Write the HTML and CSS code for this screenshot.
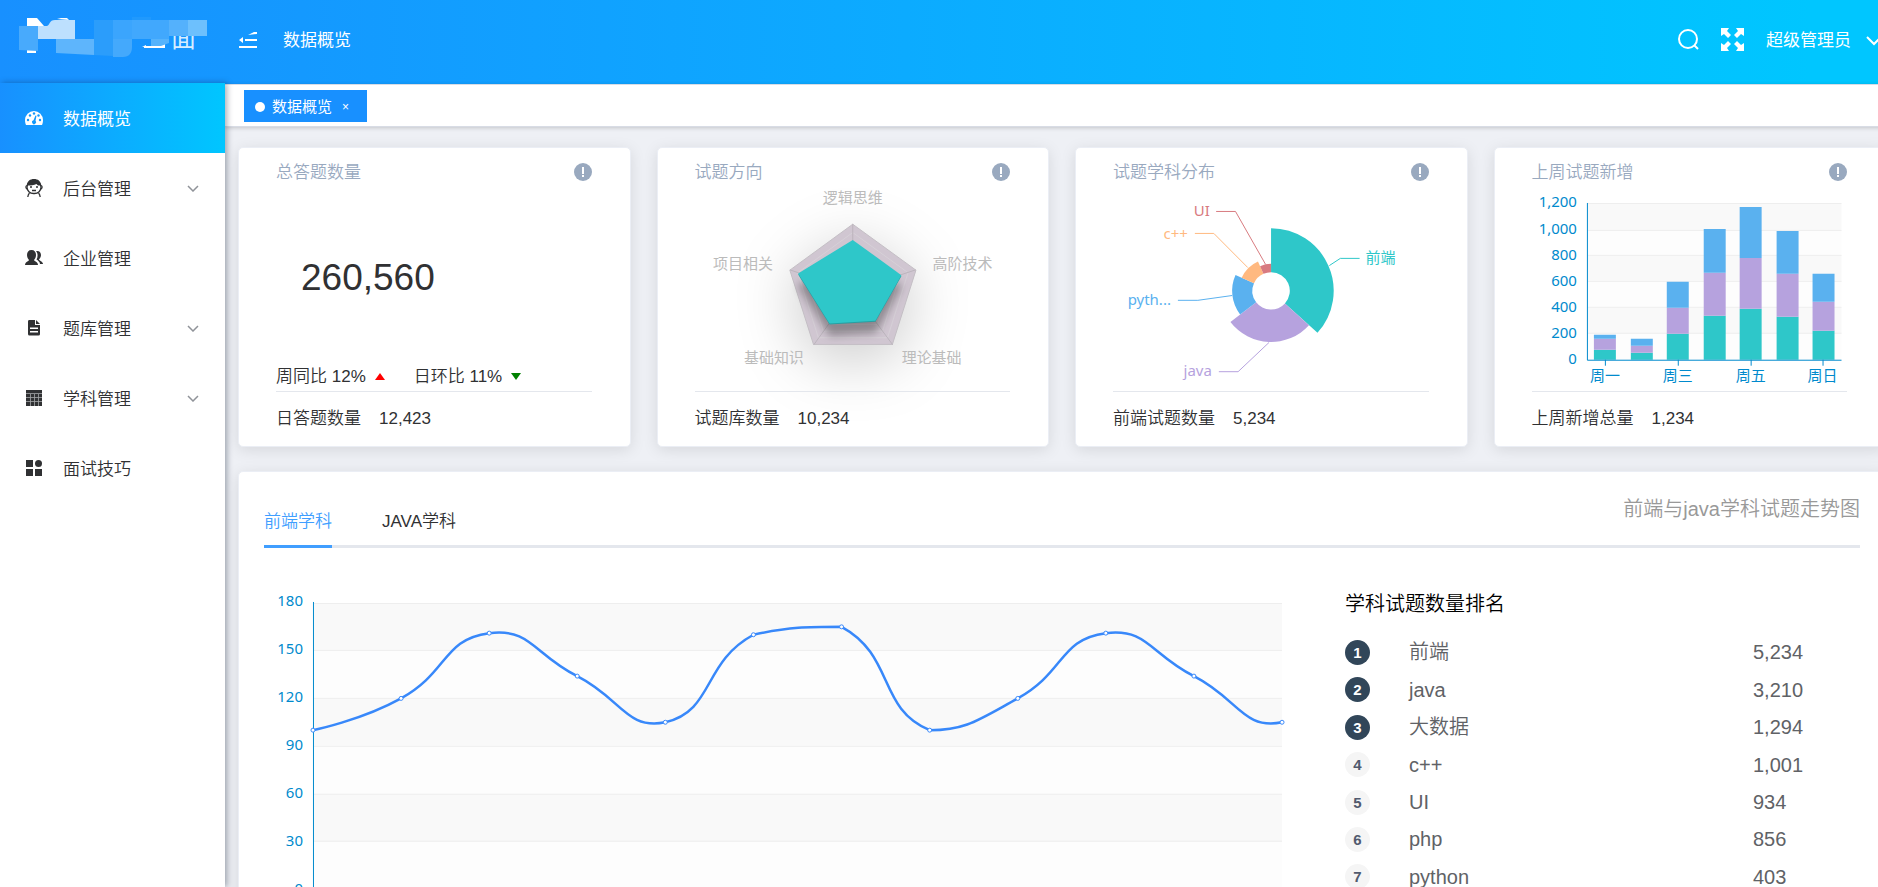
FILE: index.html
```html
<!DOCTYPE html>
<html lang="zh-CN">
<head>
<meta charset="utf-8">
<title>数据概览</title>
<link rel="stylesheet" href="styles.css">
</head>
<body>
<div class="app">
  <header class="topbar">
    <a class="logo" href="#" aria-label="首页">
      <svg width="225" height="84" viewBox="0 0 225 84">
        <text class="logo-text" x="171" y="47">面</text>
        <path fill="#1694fe" d="M168 20h32v16h-32z"/>
        <path fill="#fff" d="M27 18h10l7 8h-6v5H27zM57 19l4-1h6l2 2zM27 50h9v3h-9z"/>
        <path fill="#fff" d="M142 47l4-2v2zM144 46h17v-2h4v4h-21z"/>
        <path fill="#48aafc" d="M19 26h19v25l-19-1z"/>
        <path fill="#bde0fe" d="M38 26h9c3-1 2-6 8-6h20v19H38z"/>
        <path fill="#5eb5fc" d="M56 39h38v16l-38-2z"/>
        <path fill="#2b9dfb" d="M94 20h19v19H94zM94 39h19v17l-19-1z"/>
        <path fill="#3ba5fd" d="M113 20h19v19h-19z"/>
        <path fill="#44a9fc" d="M113 39h19v8c0 6-3 10-9 10h-10z"/>
        <path fill="#2099fd" d="M132 17h19v3h-19z"/>
        <path fill="#41a8fd" d="M132 20h37v19h-37z"/>
        <path fill="#55b3fc" d="M151 39h18v4l-8 3h-10z"/>
        <path fill="#54b1fc" d="M169 20h19v16h-19z"/>
        <path fill="#6dc0fd" d="M188 20h19v16h-19z"/>
      </svg>
    </a>
    <button class="icon-btn fold" aria-label="收起菜单">
      <svg width="18" height="16" viewBox="0 0 18 16" fill="#fff"><path d="M9 3l6-3h3v2zM6 7h12v2H6zM0 14h18v2H0zM0 8l4-3v6z"/></svg>
    </button>
    <span class="topbar-title">数据概览</span>
    <div class="topbar-right">
      <button class="icon-btn" aria-label="搜索">
        <svg width="21" height="21" viewBox="0 0 21 21" fill="none" stroke="#fff" stroke-width="2"><circle cx="10" cy="10" r="9"/><path d="M16 16l4 4"/></svg>
      </button>
      <button class="icon-btn full" aria-label="全屏">
        <svg width="23" height="23" viewBox="0 0 23 23" fill="#fff"><path d="M0 0h8L6 3l4 4-3 3-4-4-3 2z"/><path d="M23 0v8l-3-2-4 4-3-3 4-4-2-3zM23 23h-8l2-3-4-4 3-3 4 4 3-2zM0 23v-8l3 2 4-4 3 3-4 4 2 3z"/></svg>
      </button>
      <button class="user">超级管理员
        <svg width="16" height="10" viewBox="0 0 16 10" fill="none" stroke="#fff" stroke-width="2"><path d="M1 1l7 7 7-7"/></svg>
      </button>
    </div>
  </header>

  <div class="body">
    <nav class="sidebar">
      <a class="nav-item active" href="#">
        <svg class="nav-icon" viewBox="0 0 18 18"><path fill="#fff" d="M0 11a9 9 0 0 1 18 0c0 2-.5 4-1 5H1c-.5-1-1-3-1-5z"/><g fill="#1199fc"><circle cx="3" cy="11" r="1.200"/><circle cx="5" cy="6.500" r="1.200"/><circle cx="9" cy="4.500" r="1.200"/><circle cx="13.500" cy="6.500" r="1.200"/><circle cx="15" cy="11" r="1.200"/><path d="M10.500 6.500l1 .3-1 5a2 2 0 1 1-2-.5z"/></g></svg>
        <span class="nav-text">数据概览</span>
      </a>
      <a class="nav-item" href="#">
        <svg class="nav-icon" viewBox="0 0 18 18" fill="none" stroke="#303133" stroke-width="1.300"><path fill="#303133" stroke="none" d="M1.600 6.500C2.500 2 5 0 9 0s6.500 2 7.400 6.500H13L11.500 5C9 6 6 6.500 1.600 6.500z"/><rect x="2" y="2" width="14" height="12.500" rx="6.500"/><path d="M2 6.500c-1.500.5-1.500 3 .3 3.500M16 6.500c1.500.5 1.500 3-.3 3.500M5 8h2M11 8h2M7 11.500h4M4.500 14c-1 1-1.500 2-1.700 4M13.500 14c1 1 1.500 2 1.700 4"/></svg>
        <span class="nav-text">后台管理</span>
        <svg class="nav-arrow" viewBox="0 0 12 7"><path d="M1 1l5 5 5-5"/></svg>
      </a>
      <a class="nav-item" href="#">
        <svg class="nav-icon" viewBox="0 0 18 18" fill="#303133"><path d="M6.500 1C9.500 1 11 3 11 6c0 2-1 4-2 5 0 1 4 2 4 5H0c0-3 4-4 4-5-1-1-2-3-2-5 0-3 1.500-5 4.500-5z"/><path d="M11 2c3-.6 5 1 5 4 0 2-1 3-2 4.500 0 1 4 2 4 4.500h-3c0-2-2-3.500-3.500-4.500C13 8 13 4 11 2z"/></svg>
        <span class="nav-text">企业管理</span>
      </a>
      <a class="nav-item" href="#">
        <svg class="nav-icon" viewBox="0 0 18 18" fill="#303133"><path fill-rule="evenodd" d="M4 1h6v5h5v9a1.500 1.500 0 0 1-1.500 1.500h-9A1.500 1.500 0 0 1 3 15V2.500A1.500 1.500 0 0 1 4 1zM5 8.500V10h8V8.500zM5 12v1.500h8V12z"/><path d="M11 1l4 4h-4z"/></svg>
        <span class="nav-text">题库管理</span>
        <svg class="nav-arrow" viewBox="0 0 12 7"><path d="M1 1l5 5 5-5"/></svg>
      </a>
      <a class="nav-item" href="#">
        <svg class="nav-icon" viewBox="0 0 18 18"><path fill="#303133" d="M1 1h16v16H1z"/><path stroke="#a5a6a8" stroke-width=".8" d="M1 4.500h16M1 8.500h16M1 12.500h16M5.500 5v12M9.500 5v12M13.500 5v12"/></svg>
        <span class="nav-text">学科管理</span>
        <svg class="nav-arrow" viewBox="0 0 12 7"><path d="M1 1l5 5 5-5"/></svg>
      </a>
      <a class="nav-item" href="#">
        <svg class="nav-icon" viewBox="0 0 18 18" fill="#303133"><path d="M1 1h7v7H1zM1 10h7v7H1zM10 10h7v7h-7z"/><circle cx="13.500" cy="4.500" r="3.500"/></svg>
        <span class="nav-text">面试技巧</span>
      </a>
    </nav>

    <main class="main">
      <div class="tagbar">
        <div class="tag"><span class="tag-dot"></span><span>数据概览</span><button class="tag-close" aria-label="关闭">×</button></div>
      </div>

      <div class="content">
        <section class="cards">
          <article class="card">
            <div class="card-head"><h2>总答题数量</h2><svg class="tip" viewBox="0 0 18 18"><circle cx="9" cy="9" r="9" fill="#99a9bf"/><path fill="#fff" d="M8 4h2v7H8zM8 12h2v2H8z"/></svg></div>
            <div class="card-body stat">
              <div class="big">260,560</div>
              <div class="trend">
                <span class="trend-item">周同比 12% <i class="up"></i></span>
                <span class="trend-item">日环比 11% <i class="down"></i></span>
              </div>
            </div>
            <div class="card-foot"><span>日答题数量</span><span>12,423</span></div>
          </article>

          <article class="card">
            <div class="card-head"><h2>试题方向</h2><svg class="tip" viewBox="0 0 18 18"><circle cx="9" cy="9" r="9" fill="#99a9bf"/><path fill="#fff" d="M8 4h2v7H8zM8 12h2v2H8z"/></svg></div>
            <div class="card-body">
              <svg class="chart" viewBox="0 0 316 206">
                <defs>
                  <filter id="halo" x="-150%" y="-150%" width="400%" height="400%"><feGaussianBlur stdDeviation="30"/></filter>
                  <filter id="soft" x="-50%" y="-50%" width="200%" height="200%"><feGaussianBlur stdDeviation="4"/></filter>
                </defs>
                <polygon filter="url(#halo)" fill="#000" fill-opacity=".2" points="158,54 221,100 198,175 118,175 95,100"/>
                <polygon fill="#d0c6d1" stroke="#c4bfc5" points="158,39.300 221.300,85.300 197.700,159.700 118.700,159.700 95,85.300"/>
                <g fill="none" stroke="#d6d0d7">
                  <polygon points="158,47.600 213.400,87.900 192.800,153 123.600,153 102.900,87.900"/>
                  <polygon points="158,56 205.500,90.500 187.800,146.300 128.500,146.300 110.800,90.500"/>
                  <polygon points="158,64.300 197.600,93.100 182.800,139.600 133.400,139.600 118.600,93.100"/>
                </g>
                <path stroke="#bcb5bd" d="M158 106V39M158 106l63-21M158 106l40 54M158 106l-39 54M158 106L95 85"/>
                <polygon filter="url(#soft)" fill="#000" fill-opacity=".32" points="158,67 207,102 181,148 135,151 103,101"/>
                <polygon fill="#279fa2" points="158,56 206.700,91.300 180.700,137 134.700,139.700 103.300,89.700"/>
                <polygon fill="#2ec7c9" points="158,55 206.700,90.300 180.700,136 134.700,138.700 103.300,88.700"/>
                <g class="label" fill="#bbb">
                  <text x="158" y="18" text-anchor="middle">逻辑思维</text>
                  <text x="238" y="84">高阶技术</text>
                  <text x="207" y="178">理论基础</text>
                  <text x="109" y="178" text-anchor="end">基础知识</text>
                  <text x="78" y="84" text-anchor="end">项目相关</text>
                </g>
              </svg>
            </div>
            <div class="card-foot"><span>试题库数量</span><span>10,234</span></div>
          </article>

          <article class="card">
            <div class="card-head"><h2>试题学科分布</h2><svg class="tip" viewBox="0 0 18 18"><circle cx="9" cy="9" r="9" fill="#99a9bf"/><path fill="#fff" d="M8 4h2v7H8zM8 12h2v2H8z"/></svg></div>
            <div class="card-body">
              <svg class="chart" viewBox="0 0 316 206">
                <path fill="#2ec7c9" d="M158.300 43.300A62.700 62.700 0 0 1 204.800 148.100L172.200 118.600A18.700 18.700 0 0 0 158.300 87.300z"/>
                <path fill="#b6a2de" d="M196.300 140.500A51.300 51.300 0 0 1 117.600 137.100L143.400 117.400A18.700 18.700 0 0 0 172.200 118.600z"/>
                <path fill="#5ab1ef" d="M127.300 129.700A39 39 0 0 1 122.700 90.100L141.200 98.400A18.700 18.700 0 0 0 143.400 117.400z"/>
                <path fill="#ffb980" d="M128.900 92.900A32.200 32.200 0 0 1 145.200 76.600L150.700 88.900A18.700 18.700 0 0 0 141.200 98.400z"/>
                <path fill="#d87a80" d="M147.300 81.300A27 27 0 0 1 158.300 79V87.300A18.700 18.700 0 0 0 150.700 88.900z"/>
                <g fill="none">
                  <path stroke="#2ec7c9" d="M216.700 80.700L227.700 73.500H247"/>
                  <path stroke="#b6a2de" d="M156.300 157.700L125.300 187H106"/>
                  <path stroke="#5ab1ef" d="M119.300 110.700L85 115.500H65"/>
                  <path stroke="#ffb980" d="M135 82.700L101 48.500H82"/>
                  <path stroke="#d87a80" d="M152.700 79.300L122.700 26.500H103.300"/>
                </g>
                <g class="label">
                  <text x="253" y="78" fill="#2ec7c9">前端</text>
                  <text x="99" y="191" fill="#b6a2de" text-anchor="end">java</text>
                  <text x="58" y="120" fill="#5ab1ef" text-anchor="end">pyth...</text>
                  <text x="75" y="54" fill="#ffb980" text-anchor="end">c++</text>
                  <text x="97" y="31" fill="#d87a80" text-anchor="end">UI</text>
                </g>
              </svg>
            </div>
            <div class="card-foot"><span>前端试题数量</span><span>5,234</span></div>
          </article>

          <article class="card">
            <div class="card-head"><h2>上周试题新增</h2><svg class="tip" viewBox="0 0 18 18"><circle cx="9" cy="9" r="9" fill="#99a9bf"/><path fill="#fff" d="M8 4h2v7H8zM8 12h2v2H8z"/></svg></div>
            <div class="card-body">
              <svg class="chart" viewBox="0 0 316 206">
                <path fill="#f9f9f9" d="M56 19h254v26H56zM56 71h254v26H56zM56 123h254v26H56z"/>
                <path fill="#fdfdfd" d="M56 45h254v26H56zM56 97h254v26H56zM56 149h254v26H56z"/>
                <path stroke="#eee" d="M56 18.500h254M56 45.500h254M56 70.500h254M56 96.500h254M56 122.500h254M56 148.500h254"/>
                <g fill="#2ec7c9"><path d="M62 165h22v10H62zM99 168h22v7H99zM135 149h22v26h-22zM172 131h22v44h-22zM208 124h22v51h-22zM245 132h22v43h-22zM281 146h22v29h-22z"/></g>
                <g fill="#b6a2de"><path d="M62 154h22v11H62zM99 161h22v7H99zM135 123h22v26h-22zM172 88h22v43h-22zM208 73h22v51h-22zM245 89h22v43h-22zM281 117h22v29h-22z"/></g>
                <g fill="#5ab1ef"><path d="M62 150h22v4H62zM99 154h22v7H99zM135 97h22v26h-22zM172 44h22v44h-22zM208 22h22v51h-22zM245 46h22v43h-22zM281 89h22v28h-22z"/></g>
                <path stroke="#008acd" fill="none" d="M55.500 18v157.500H310M73.500 175v6M146.500 175v6M219.500 175v6M291.500 175v6"/>
                <g class="label" fill="#008acd">
                  <g text-anchor="end">
                    <text x="45" y="22">1,200</text><text x="45" y="49">1,000</text><text x="45" y="75">800</text><text x="45" y="101">600</text><text x="45" y="127">400</text><text x="45" y="153">200</text><text x="45" y="179">0</text>
                  </g>
                  <g text-anchor="middle">
                    <text x="73" y="196">周一</text><text x="146" y="196">周三</text><text x="219" y="196">周五</text><text x="291" y="196">周日</text>
                  </g>
                </g>
              </svg>
            </div>
            <div class="card-foot"><span>上周新增总量</span><span>1,234</span></div>
          </article>
        </section>

        <section class="panel">
          <div class="panel-head">
            <div class="tabs" role="tablist">
              <button class="tab current" role="tab" aria-selected="true">前端学科</button>
              <button class="tab" role="tab" aria-selected="false">JAVA学科</button>
            </div>
            <h2 class="panel-title">前端与java学科试题走势图</h2>
          </div>
          <div class="panel-body">
            <svg class="chart" viewBox="0 0 1082 340">
              <path fill="#f9f9f9" d="M49 23h970v48H49zM49 118h970v48H49zM49 214h970v48H49z"/>
              <path fill="#fdfdfd" d="M49 71h970v47H49zM49 166h970v48H49zM49 262h970v48H49z"/>
              <path stroke="#eee" d="M49 23.500h970M49 70.500h970M49 118.500h970M49 166.500h970M49 214.500h970M49 261.500h970"/>
              <path stroke="#008acd" fill="none" d="M49.500 22v287.500H1019"/>
              <g class="label" fill="#008acd" text-anchor="end">
                <text x="39" y="26">180</text><text x="39" y="74">150</text><text x="39" y="122">120</text><text x="39" y="170">90</text><text x="39" y="218">60</text><text x="39" y="266">30</text><text x="39" y="314">0</text>
              </g>
              <g transform="translate(49 23)">
                <path fill="none" stroke="#3888fa" stroke-width="2.500" d="M0 127.300C0 127.300 47.500 117.900 88.200 95.500C135.700 69.300 129.800 36.100 176.400 30.200C218 24.900 220.700 51.100 264.500 73.200C308.900 95.700 313.500 127.300 352.700 119.400C401.700 107.900 389.400 59.700 440.900 31.800C477.600 23.900 494.300 23.900 529.100 23.900C582.500 52.800 565.100 106.100 617.300 127.300C653.300 127.300 664.800 117.900 705.500 95.500C753 69.300 747 36.100 793.600 30.200C835.200 24.900 838 51.100 881.800 73.200C926.200 95.700 930.800 127.300 970 119.400"/>
                <g fill="#fff" stroke="#3888fa">
                  <circle cx="0" cy="127.300" r="2"/><circle cx="88.200" cy="95.500" r="2"/><circle cx="176.400" cy="30.200" r="2"/><circle cx="264.500" cy="73.200" r="2"/><circle cx="352.700" cy="119.400" r="2"/><circle cx="440.900" cy="31.800" r="2"/><circle cx="529.100" cy="23.900" r="2"/><circle cx="617.300" cy="127.300" r="2"/><circle cx="705.500" cy="95.500" r="2"/><circle cx="793.600" cy="30.200" r="2"/><circle cx="881.800" cy="73.200" r="2"/><circle cx="970" cy="119.400" r="2"/>
                </g>
              </g>
            </svg>
            <div class="rank">
              <h3>学科试题数量排名</h3>
              <table class="rank-table">
                <tbody>
                  <tr><td><span class="no top">1</span></td><td>前端</td><td>5,234</td></tr>
                  <tr><td><span class="no top">2</span></td><td>java</td><td>3,210</td></tr>
                  <tr><td><span class="no top">3</span></td><td>大数据</td><td>1,294</td></tr>
                  <tr><td><span class="no">4</span></td><td>c++</td><td>1,001</td></tr>
                  <tr><td><span class="no">5</span></td><td>UI</td><td>934</td></tr>
                  <tr><td><span class="no">6</span></td><td>php</td><td>856</td></tr>
                  <tr><td><span class="no">7</span></td><td>python</td><td>403</td></tr>
                </tbody>
              </table>
            </div>
          </div>
        </section>
      </div>
    </main>
  </div>
</div>
</body>
</html>
```
FILE: styles.css
```css
* { box-sizing: border-box; }

body {
  margin: 0;
  overflow: hidden;
  font: 350 17px/24px "Liberation Sans", "Noto Sans CJK SC", sans-serif;
  color: #303133;
  background: #eef0f5;
}

h2, h3 { margin: 0; font-weight: 350; }
a { color: inherit; text-decoration: none; }
button {
  padding: 0;
  border: 0;
  background: none;
  font: inherit;
  color: inherit;
  cursor: pointer;
}
svg { display: block; flex: none; }

/* The dashboard is slightly wider than the window */
.app {
  display: flex;
  flex-direction: column;
  width: calc(100% + 8px);
  height: 100vh;
}

/* Top bar */
.topbar {
  display: flex;
  align-items: center;
  flex: none;
  height: 84px;
  padding-bottom: 4px;
  background: linear-gradient(90deg, #1890ff, #00c6ff 96%);
  color: #fff;
  font-weight: 400;
}
.logo { flex: none; width: 239px; height: 80px; }
.logo-text { font-size: 25px; fill: #d8edff; }
.icon-btn { flex: none; }
.fold { width: 18px; margin-right: 26px; }
.topbar-title { padding-top: 2px; }
.topbar-right {
  display: flex;
  align-items: center;
  gap: 22px;
  height: 78px;
  margin: 0 4px 2px auto;
}
.user {
  display: flex;
  align-items: center;
  gap: 15px;
  padding-top: 4px;
}

.body { display: flex; flex: 1; min-height: 0; }

/* Side menu */
.sidebar {
  position: relative;
  z-index: 2;
  flex: none;
  width: 225px;
  margin-top: -1px;
  background: #fff;
  box-shadow: 2px 0 6px rgba(0, 21, 41, .35);
}
.nav-item {
  display: flex;
  align-items: center;
  height: 70px;
  padding: 0 26px 0 25px;
}
.nav-icon { width: 18px; height: 18px; }
.nav-text { flex: 1; margin-left: 20px; padding-top: 3px; }
.nav-arrow { width: 12px; height: 7px; fill: none; stroke: #909399; stroke-width: 1.500; }
.active {
  background: linear-gradient(90deg, #1890ff, #00c6ff);
  color: #fff;
  font-weight: 400;
}

.main { flex: 1; min-width: 0; display: flex; flex-direction: column; }

/* Opened pages */
.tagbar {
  flex: none;
  height: 43px;
  padding: 5px 19px;
  background: #fff;
  border-top: 1px solid #d8dce5;
  border-bottom: 1px solid #d8dce5;
  box-shadow: 0 1px 4px rgba(0, 0, 0, .18);
}
.tag {
  display: inline-flex;
  align-items: center;
  height: 32px;
  padding: 2px 18px 0 11px;
  background: #1890ff;
  color: #fff;
  font-size: 15px;
  font-weight: 400;
}
.tag-dot { width: 10px; height: 10px; margin-right: 7px; border-radius: 50%; background: #fff; }
.tag-close { margin-left: 10px; font-size: 12px; }

.content { padding: 20px 0 0 13px; }

/* Summary cards */
.cards {
  display: grid;
  grid-template-columns: repeat(4, minmax(0, 1fr));
  gap: 26px;
}
.card, .panel {
  background: #fff;
  border: 1px solid #ebeef5;
  border-radius: 5px;
  box-shadow: 0 3px 15px rgba(0, 0, 0, .1);
}
.card { display: flex; flex-direction: column; padding: 11px 38px 0 37px; }
.card-head {
  display: flex;
  align-items: center;
  justify-content: space-between;
  height: 26px;
}
.card-head h2 { padding-top: 2px; font-size: 17px; color: #99a9bf; }
.tip { width: 18px; height: 18px; }
.card-body { flex: 1; }
.card-foot {
  display: flex;
  align-items: center;
  gap: 18px;
  height: 55px;
  border-top: 1px solid #e4e7ed;
}
.stat { display: flex; flex-direction: column; justify-content: space-between; }
.big { padding: 70px 0 0 25px; font-size: 37px; line-height: 46px; }
.trend { display: flex; gap: 29px; padding-bottom: 2px; }
.trend-item { display: flex; align-items: center; gap: 9px; }
.up, .down { border: 5px solid transparent; }
.up { border-top: 0; border-bottom: 7px solid red; }
.down { border-bottom: 0; border-top: 7px solid green; }

.chart { width: 100%; height: auto; overflow: visible; }
.label { font: 400 15px "Noto Sans", "Noto Sans CJK SC", sans-serif; }

/* Trend panel */
.panel { height: 520px; margin-top: 24px; padding: 0 25px; }
.panel-head {
  display: flex;
  justify-content: space-between;
  height: 76px;
  border-bottom: 3px solid #e4e7ed;
}
.tabs { display: flex; gap: 50px; align-self: flex-end; margin-bottom: -3px; }
.tab { height: 50px; padding-top: 2px; border-bottom: 3px solid transparent; }
.current { color: #409eff; border-color: #409eff; }
.panel-title { font-size: 20px; line-height: 75px; color: #999; }
.panel-body {
  display: grid;
  grid-template-columns: minmax(0, 1fr) 515px;
  align-items: start;
  padding-top: 32px;
}
.rank h3 { padding-top: 9px; font-size: 20px; line-height: 30px; color: #000; }
.rank-table {
  width: 100%;
  height: 262px;
  margin-top: 15px;
  border-collapse: collapse;
  table-layout: fixed;
  font-size: 20px;
  color: #606266;
}
.rank-table td { padding: 0; }
.rank-table td:first-child { width: 64px; }
.rank-table td:last-child { width: 107px; }
.no {
  display: block;
  width: 25px;
  border-radius: 50%;
  background: #f5f5f5;
  color: #515a6e;
  font-size: 15px;
  font-weight: 700;
  line-height: 25px;
  text-align: center;
}
.top { background: #314659; color: #fff; }
```
